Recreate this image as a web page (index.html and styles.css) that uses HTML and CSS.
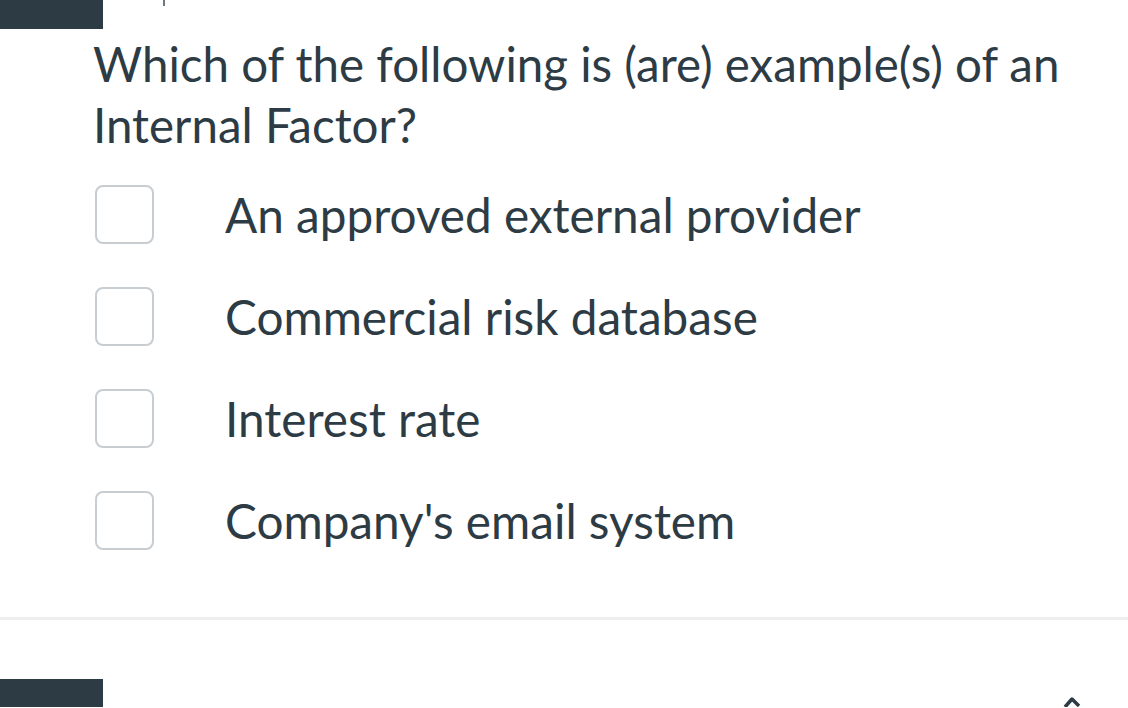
FILE: index.html
```html
<!DOCTYPE html>
<html lang="en">
<head>
<meta charset="utf-8">
<title>Quiz question</title>
<link rel="stylesheet" href="styles.css">
</head>
<body>
<div class="page">
  <header class="topbar">
    <div class="dark-block"></div>
    <div class="tick"></div>
  </header>
  <main class="question">
    <p class="question-text">Which of the following is (are) example(s) of an Internal Factor?</p>
    <ul class="answers">
      <li class="answer"><span class="box"></span><span class="label">An approved external provider</span></li>
      <li class="answer"><span class="box"></span><span class="label">Commercial risk database</span></li>
      <li class="answer"><span class="box"></span><span class="label">Interest rate</span></li>
      <li class="answer"><span class="box"></span><span class="label">Company's email system</span></li>
    </ul>
  </main>
  <hr class="divider">
  <footer class="bottombar">
    <div class="dark-block"></div>
    <svg class="chevron" width="24" height="14" viewBox="0 0 24 14"><path d="M4 14 L11 6 L18 13" fill="none" stroke="#2d3b45" stroke-width="3.5" stroke-linejoin="round"/></svg>
  </footer>
</div>
</body>
</html>
```
FILE: styles.css
```css
html, body {
  margin: 0;
  padding: 0;
  background: #fff;
}
body {
  width: 1128px;
  height: 708px;
  overflow: hidden;
  font-family: Lato, "Open Sans", sans-serif;
  color: #2d3b45;
}
.page {
  display: flex;
  flex-direction: column;
  height: 708px;
}
.topbar {
  display: flex;
  height: 29px;
  flex: none;
}
.dark-block {
  width: 103px;
  height: 100%;
  background: #2d3b45;
}
.tick {
  width: 2px;
  height: 6px;
  background: #6c7a84;
  margin-left: 60px;
}
.question {
  padding: 0 0 0 93px;
}
.question-text {
  margin: 4px 0 0;
  font-size: 47.5px;
  line-height: 61px;
  width: 1010px;
}
.answers {
  list-style: none;
  margin: 30px 0 0;
  padding: 0 0 0 2px;
  display: flex;
  flex-direction: column;
  gap: 43px;
}
.answer {
  display: flex;
  align-items: center;
  height: 59px;
}
.box {
  width: 55px;
  height: 55px;
  border: 2px solid #c7cdd1;
  border-radius: 8px;
  flex: none;
}
.label {
  margin-left: 71px;
  font-size: 47.7px;
  line-height: 59px;
}
.divider {
  margin: 67px 0 0;
  border: 0;
  height: 3px;
  background: #eeeeee;
}
.bottombar {
  display: flex;
  justify-content: space-between;
  align-items: flex-end;
  margin-top: 59px;
  height: 28px;
}
.chevron {
  margin-right: 43px;
  display: block;
}
```
